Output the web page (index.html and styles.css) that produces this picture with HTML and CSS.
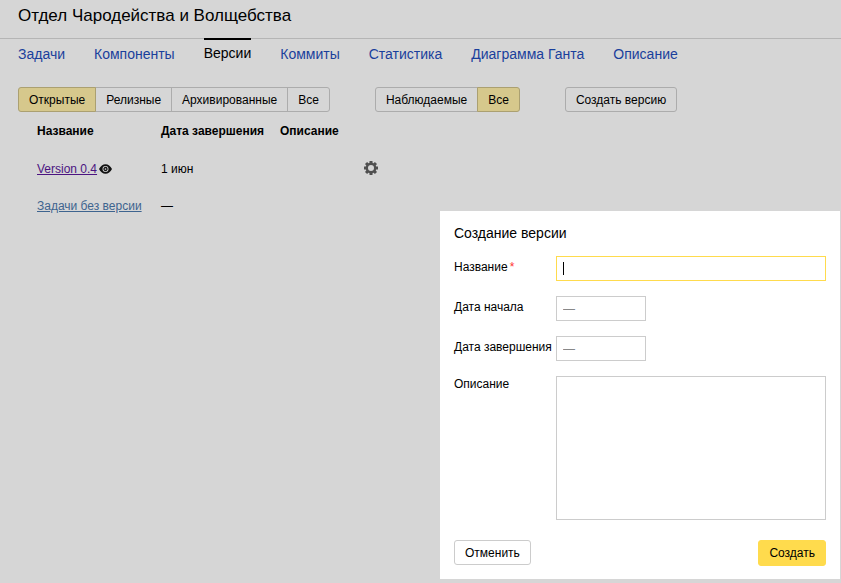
FILE: index.html
```html
<!DOCTYPE html>
<html lang="ru">
<head>
<meta charset="utf-8">
<title>Отдел Чародейства и Волщебства</title>
<link rel="stylesheet" href="styles.css">
</head>
<body>
<header class="header"><h1 class="header-title">Отдел Чародейства и Волщебства</h1></header>
<nav class="tabs">
  <a class="tab" href="#tasks">Задачи</a>
  <a class="tab" href="#components">Компоненты</a>
  <a class="tab tab-active" href="#versions" aria-current="page">Версии</a>
  <a class="tab" href="#commits">Коммиты</a>
  <a class="tab" href="#stats">Статистика</a>
  <a class="tab" href="#gantt">Диаграмма Ганта</a>
  <a class="tab" href="#about">Описание</a>
</nav>
<main>
  <div class="toolbar">
    <div class="group">
      <button class="button button-checked" type="button">Открытые</button>
      <button class="button" type="button">Релизные</button>
      <button class="button" type="button">Архивированные</button>
      <button class="button" type="button">Все</button>
    </div>
    <div class="group">
      <button class="button" type="button">Наблюдаемые</button>
      <button class="button button-checked" type="button">Все</button>
    </div>
    <button class="button" type="button">Создать версию</button>
  </div>
  <table class="versions">
    <colgroup><col class="col-name"><col class="col-date"><col class="col-about"><col></colgroup>
    <thead>
      <tr><th>Название</th><th>Дата завершения</th><th>Описание</th><td></td></tr>
    </thead>
    <tbody>
      <tr>
        <td>
          <div class="name">
            <a class="link-visited" href="#v04">Version 0.4</a>
            <svg class="eye" viewBox="0 0 13 10" aria-hidden="true"><path fill="#111" fill-rule="evenodd" d="M0 5Q2.500.2 6.500.2T13 5Q10.500 9.800 6.500 9.800T0 5ZM6.500 2A3 3 0 1 0 6.500 8A3 3 0 1 0 6.500 2Z"/><circle cx="6.500" cy="5" r="1.500" fill="none" stroke="#111" stroke-width="1.300"/></svg>
          </div>
        </td>
        <td>1 июн</td>
        <td></td>
        <td>
          <button class="gear-button" type="button" aria-label="Настройки">
            <svg class="gear" viewBox="-7 -7 14 14" aria-hidden="true">
              <circle r="4.200" fill="none" stroke="#505050" stroke-width="2.400"/>
              <g fill="#505050">
                <path id="teeth" d="M-1.500-7H1.500V-4.500H-1.500ZM-1.500 4.500H1.500V7H-1.500ZM-7-1.500H-4.500V1.500H-7ZM4.500-1.500H7V1.500H4.500Z"/>
                <use href="#teeth" transform="rotate(45)"/>
              </g>
            </svg>
          </button>
        </td>
      </tr>
      <tr>
        <td><a class="link" href="#none">Задачи без версии</a></td>
        <td>—</td>
        <td></td>
        <td></td>
      </tr>
    </tbody>
  </table>
</main>
<form class="dialog" role="dialog" aria-labelledby="dialog-title">
  <h2 class="dialog-title" id="dialog-title">Создание версии</h2>
  <div class="field">
    <label class="label" for="name">Название<span class="required">*</span></label>
    <div class="control"><input class="input input-focused" id="name" type="text"><span class="caret"></span></div>
  </div>
  <div class="field">
    <label class="label" for="start">Дата начала</label>
    <input class="input input-date" id="start" type="text" placeholder="—">
  </div>
  <div class="field">
    <label class="label" for="end">Дата завершения</label>
    <input class="input input-date" id="end" type="text" placeholder="—">
  </div>
  <div class="field field-tall">
    <label class="label" for="about">Описание</label>
    <textarea class="input textarea" id="about"></textarea>
  </div>
  <div class="actions">
    <button class="button button-light" type="button">Отменить</button>
    <button class="button button-primary" type="submit">Создать</button>
  </div>
</form>
</body>
</html>
```
FILE: styles.css
```css
* { box-sizing: border-box; }

body {
  margin: 0;
  min-height: 100vh;
  background: #d6d6d6;
  color: #000;
  font: 12px/16px "Liberation Sans", Arial, sans-serif;
}

button, input, textarea { font: inherit; color: inherit; }

.header {
  height: 39px;
  padding: 6px 18px 0;
  border-bottom: 1px solid #b5b5b5;
}

.header-title {
  margin: 0;
  font-size: 17px;
  line-height: 20px;
  font-weight: normal;
}

.tabs {
  display: flex;
  gap: 29px;
  padding: 0 18px;
  font-size: 14px;
  line-height: 20px;
}

.tab {
  padding-top: 5px;
  color: #1a3f9c;
  text-decoration: none;
}

.tab-active {
  margin-top: -1px;
  border-top: 2px solid #000;
  padding-top: 3px;
  color: #000;
}

.toolbar {
  display: flex;
  gap: 45px;
  padding: 23px 18px 0;
}

.group { display: flex; }

.button {
  height: 25px;
  padding: 0 10px;
  border: 1px solid #acacac;
  border-radius: 3px;
  background: transparent;
  white-space: nowrap;
}

.group .button { border-radius: 0; }
.group .button + .button { margin-left: -1px; }
.group .button:first-child { border-radius: 3px 0 0 3px; }
.group .button:last-child { border-radius: 0 3px 3px 0; }

.button-checked {
  position: relative;
  border-color: #aba071;
  background: #d6c88c;
}

.versions {
  margin: 0 37px;
  border-collapse: collapse;
  table-layout: fixed;
  width: 350px;
}

.col-name { width: 124px; }
.col-date { width: 119px; }
.col-about { width: 84px; }

.versions th, .versions td {
  height: 37px;
  padding: 0;
  text-align: left;
  white-space: nowrap;
}

.versions tbody td { padding-top: 2px; }

.name {
  display: flex;
  align-items: center;
  gap: 2px;
}

.link-visited { color: #4b1481; }
.link { color: #3e648f; }
.eye { width: 13px; height: 10px; }

.gear-button {
  display: block;
  padding: 0 0 2px;
  border: 0;
  background: none;
}

.gear { display: block; width: 14px; height: 14px; }

.dialog {
  position: fixed;
  right: 1px;
  bottom: 4px;
  display: flex;
  flex-direction: column;
  gap: 15px;
  width: 400px;
  padding: 12px 14px 13px;
  background: #fff;
}

.dialog-title {
  margin: 0 0 -2px;
  font-size: 14px;
  line-height: 20px;
  font-weight: normal;
}

.field { display: flex; }

.label {
  flex: none;
  width: 102px;
  padding-top: 3px;
}

.field-tall .label { padding-top: 0; }

.required { margin-left: 2px; color: #f33; }

.control {
  position: relative;
  display: flex;
  flex: 1;
}

.input {
  flex: 1;
  min-width: 0;
  height: 25px;
  padding: 0 6px;
  border: 1px solid #ccc;
  border-radius: 0;
  outline: 0;
  background: #fff;
}

.input::placeholder { color: #888; opacity: 1; }
.input-focused { border-color: #ffdb4d; }
.input-date { flex: none; width: 90px; }
.textarea { height: 144px; resize: none; }

.caret {
  position: absolute;
  top: 6px;
  left: 7px;
  width: 1px;
  height: 13px;
  background: #000;
}

.actions {
  display: flex;
  justify-content: space-between;
  padding-top: 5px;
}

.button-light { border-color: #ccc; }

.button-primary {
  height: 26px;
  border-color: #ffdb4d;
  background: #ffdb4d;
}
```
